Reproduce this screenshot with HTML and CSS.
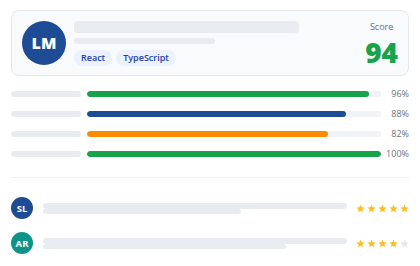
FILE: index.html
```html
<!DOCTYPE html>
<html>
<head>
<meta charset="utf-8">
<link rel="stylesheet" href="styles.css">
</head>
<body>
<div class="page">
  <div class="card">
    <div class="avatar avatar-lg">LM</div>
    <div class="info">
      <div class="ph ph-title"></div>
      <div class="ph ph-sub"></div>
      <div class="chips">
        <span class="chip">React</span>
        <span class="chip">TypeScript</span>
      </div>
    </div>
    <div class="score">
      <div class="score-label">Score</div>
      <div class="score-value">94</div>
    </div>
  </div>

  <div class="bars">
    <div class="bar-row">
      <div class="ph ph-label"></div>
      <div class="track"><div class="fill fill-green" style="width:96%"></div></div>
      <div class="pct">96%</div>
    </div>
    <div class="bar-row">
      <div class="ph ph-label"></div>
      <div class="track"><div class="fill fill-blue" style="width:88%"></div></div>
      <div class="pct">88%</div>
    </div>
    <div class="bar-row">
      <div class="ph ph-label"></div>
      <div class="track"><div class="fill fill-orange" style="width:82%"></div></div>
      <div class="pct">82%</div>
    </div>
    <div class="bar-row">
      <div class="ph ph-label"></div>
      <div class="track"><div class="fill fill-green" style="width:100%"></div></div>
      <div class="pct">100%</div>
    </div>
  </div>

  <div class="divider"></div>

  <div class="reviews">
    <div class="review">
      <div class="avatar avatar-sm avatar-blue">SL</div>
      <div class="review-lines">
        <div class="ph ph-r1"></div>
        <div class="ph ph-r2" style="width:65%"></div>
      </div>
      <div class="stars">
        <svg class="star on" viewBox="0 0 24 24"><path d="M12 1.5l3.1 7.2 7.8.7-5.9 5.1 1.8 7.7L12 18.1l-6.8 4.1 1.8-7.7-5.9-5.1 7.8-.7z"/></svg>
        <svg class="star on" viewBox="0 0 24 24"><path d="M12 1.5l3.1 7.2 7.8.7-5.9 5.1 1.8 7.7L12 18.1l-6.8 4.1 1.8-7.7-5.9-5.1 7.8-.7z"/></svg>
        <svg class="star on" viewBox="0 0 24 24"><path d="M12 1.5l3.1 7.2 7.8.7-5.9 5.1 1.8 7.7L12 18.1l-6.8 4.1 1.8-7.7-5.9-5.1 7.8-.7z"/></svg>
        <svg class="star on" viewBox="0 0 24 24"><path d="M12 1.5l3.1 7.2 7.8.7-5.9 5.1 1.8 7.7L12 18.1l-6.8 4.1 1.8-7.7-5.9-5.1 7.8-.7z"/></svg>
        <svg class="star on" viewBox="0 0 24 24"><path d="M12 1.5l3.1 7.2 7.8.7-5.9 5.1 1.8 7.7L12 18.1l-6.8 4.1 1.8-7.7-5.9-5.1 7.8-.7z"/></svg>
      </div>
    </div>
    <div class="review">
      <div class="avatar avatar-sm avatar-teal">AR</div>
      <div class="review-lines">
        <div class="ph ph-r1"></div>
        <div class="ph ph-r2" style="width:80%"></div>
      </div>
      <div class="stars">
        <svg class="star on" viewBox="0 0 24 24"><path d="M12 1.5l3.1 7.2 7.8.7-5.9 5.1 1.8 7.7L12 18.1l-6.8 4.1 1.8-7.7-5.9-5.1 7.8-.7z"/></svg>
        <svg class="star on" viewBox="0 0 24 24"><path d="M12 1.5l3.1 7.2 7.8.7-5.9 5.1 1.8 7.7L12 18.1l-6.8 4.1 1.8-7.7-5.9-5.1 7.8-.7z"/></svg>
        <svg class="star on" viewBox="0 0 24 24"><path d="M12 1.5l3.1 7.2 7.8.7-5.9 5.1 1.8 7.7L12 18.1l-6.8 4.1 1.8-7.7-5.9-5.1 7.8-.7z"/></svg>
        <svg class="star on" viewBox="0 0 24 24"><path d="M12 1.5l3.1 7.2 7.8.7-5.9 5.1 1.8 7.7L12 18.1l-6.8 4.1 1.8-7.7-5.9-5.1 7.8-.7z"/></svg>
        <svg class="star off" viewBox="0 0 24 24"><path d="M12 1.5l3.1 7.2 7.8.7-5.9 5.1 1.8 7.7L12 18.1l-6.8 4.1 1.8-7.7-5.9-5.1 7.8-.7z"/></svg>
      </div>
    </div>
  </div>
</div>
</body>
</html>
```
FILE: styles.css
```css
* { box-sizing: border-box; }
html, body { margin: 0; padding: 0; background: #ffffff; }
body { font-family: "Open Sans", "DejaVu Sans", sans-serif; color: #111827; }

.page { width: 420px; padding: 10px 11px 0; }

.card {
  display: flex;
  align-items: center;
  gap: 8px;
  height: 66px;
  padding: 10px;
  border: 1px solid #e5e7eb;
  border-radius: 8px;
  background: #f8fafc;
}

.avatar {
  flex: none;
  border-radius: 50%;
  color: #ffffff;
  font-weight: 700;
  display: flex;
  align-items: center;
  justify-content: center;
}
.avatar-lg { width: 44px; height: 44px; background: #1d4b94; font-size: 16px; font-weight: 800; }
.avatar-sm { width: 22px; height: 22px; font-size: 9.5px; }
.avatar-blue { background: #1d4b94; }
.avatar-teal { background: #0d9488; }

.info { flex: 1; display: flex; flex-direction: column; }

.ph { background: #e8ebf0; border-radius: 3px; }
.ph-title { width: 225px; height: 12px; border-radius: 4px; }
.ph-sub { width: 141px; height: 6px; margin-top: 5px; }

.chips { display: flex; gap: 4px; margin-top: 6px; }
.chip {
  height: 16px;
  line-height: 16px;
  padding: 0 7px;
  border-radius: 8px;
  background: #ebf2fd;
  color: #1e40af;
  font-size: 9px;
  font-weight: 600;
}

.score { flex: none; display: flex; flex-direction: column; align-items: center; }
.score-label { font-size: 9px; line-height: 11px; color: #6b7280; margin-bottom: 6px; }
.score-value { font-size: 28px; line-height: 28px; font-weight: 800; color: #16a34a; }

.bars { display: flex; flex-direction: column; gap: 8px; margin-top: 12px; }
.bar-row { display: flex; align-items: center; height: 12px; }
.ph-label { width: 70px; height: 6px; flex: none; }
.track {
  flex: 1;
  height: 6px;
  margin-left: 6px;
  border-radius: 3px;
  background: #f1f3f6;
  overflow: hidden;
}
.fill { height: 100%; border-radius: 3px; }
.fill-green { background: #16a34a; }
.fill-blue { background: #1d4b94; }
.fill-orange { background: #fb8c00; }
.pct {
  width: 24px;
  margin-left: 4px;
  text-align: right;
  font-size: 9px;
  line-height: 12px;
  color: #6b7280;
  white-space: nowrap;
}

.divider { height: 1px; background: #eef0f3; margin-top: 17px; }

.reviews { display: flex; flex-direction: column; gap: 13px; margin-top: 19px; }
.review { display: flex; align-items: center; height: 22px; }
.review-lines { flex: 1; margin-left: 10px; display: flex; flex-direction: column; }
.ph-r1 { height: 6px; width: 100%; }
.ph-r2 { height: 5px; }

.stars { flex: none; display: flex; gap: 2px; margin-left: 9px; }
.star { width: 9px; height: 9px; display: block; }
.star.on { fill: #fbbf24; }
.star.off { fill: #e5e7eb; }
```
